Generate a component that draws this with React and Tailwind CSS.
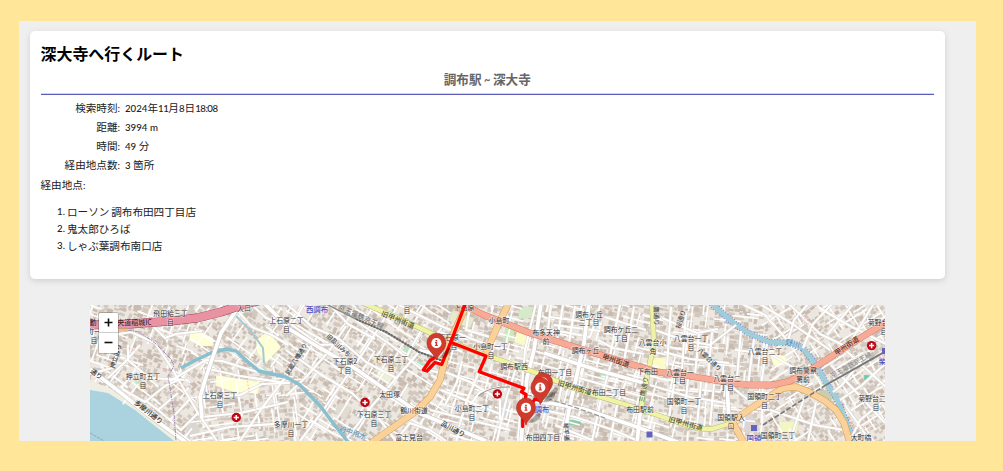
import React from "react";

const jp = "font-['Noto_Sans_CJK_JP',sans-serif]";
const num = "font-['Lato','Noto_Sans_CJK_JP',sans-serif]";

/* ---------- map data ---------- */

function rng(seed) {
  let s = seed;
  return () => {
    s = (s * 1664525 + 1013904223) % 4294967296;
    return s / 4294967296;
  };
}

// regional street direction in degrees
const angleAt = (x, y) => {
  if (x < 200) return y > 370 ? 38 : 20;
  if (x < 300) return y > 370 ? -8 : 35;
  if (x < 440) return 32;
  if (x < 680) return 15;
  if (x < 760) return 6;
  return -32;
};

function makeBuildings() {
  const r = rng(77);
  const out = [];
  for (let y = 302; y < 444; y += 4.6) {
    for (let x = 88; x < 888; x += 5) {
      if (r() < 0.24) continue;
      const w = 2.4 + r() * 3.8;
      const h = 2 + r() * 3.2;
      const a = angleAt(x, y) + (r() - 0.5) * 8;
      const shade = r() < 0.35 ? "#c9bbb0" : "#d3c8be";
      out.push([x + r() * 2, y + r() * 2, w, h, a, shade]);
    }
  }
  return out;
}

function makeLanes() {
  const r = rng(9);
  const out = [];
  for (let y = 300; y < 448; y += 15) {
    for (let x = 92; x < 890; x += 18) {
      const a = (angleAt(x, y) * Math.PI) / 180;
      const l = 7 + r() * 12;
      const px = x + r() * 6;
      const py = y + r() * 6;
      if (r() < 0.55) out.push([px - Math.cos(a) * l, py - Math.sin(a) * l, px + Math.cos(a) * l, py + Math.sin(a) * l]);
      const m = 5 + r() * 10;
      if (r() < 0.55) out.push([px + Math.sin(a) * m, py - Math.cos(a) * m, px - Math.sin(a) * m, py + Math.cos(a) * m]);
    }
  }
  return out;
}

const buildings = makeBuildings();
const lanes = makeLanes();

const areas = [
  ["190,332 197,330 213,338 213,346 202,346 189,341", "#ffffd6"],
  ["216,375 260,382 258,394 233,392 216,386", "#ffffd6"],
  ["256,340 268,331 281,347 266,363 257,353", "#ffffd6"],
  ["340,402 352,408 345,420 334,412", "#e0dbd3"],
  ["380,366 395,373 390,383 376,376", "#edf0d8"],
  ["452,311 474,318 470,328 449,320", "#e6ebcc"],
  ["400,352 408,346 412,352 405,356", "#b6e8c6"],
  ["417,361 424,363 421,370 415,367", "#a8ebc2"],
  ["136,381 142,382 141,389 135,387", "#b8ebc9"],
  ["259,370 264,366 267,371 262,373", "#b8ebc9"],
  ["506,327 515,328 512,341 503,339", "#c8ecb5"],
  ["517,331 529,333 525,346 514,342", "#fbfbc8"],
  ["520,308 533,307 531,318 518,319", "#d4ebc9"],
  ["602,371 606,371 604,381 599,379", "#a8ebc2"],
  ["569,420 581,420 581,425 569,425", "#8bcaa5"],
  ["653,358 667,357 666,371 652,369", "#fbfbc8"],
  ["769,353 786,356 787,365 774,366", "#ffffd6"],
  ["779,421 799,422 797,433 780,434", "#f2f5c4"],
  ["812,394 826,390 836,397 828,402", "#cccdb0"],
  ["820,384 828,380 829,385 823,388", "#c8ecb5"],
  ["864,375 869,375 869,380 864,380", "#66cfa8"],
  ["740,414 750,411 760,430 745,434", "#ddd5d3"],
  ["527,398 548,402 543,411 527,407", "#e3d8da"],
  ["500,401 512,404 507,419 495,415", "#dadada"],
  ["185,422 194,418 200,431 188,440", "#dad6d1"],
];

const minorRoads = [
  "90,326 108,336 131,332 155,343 171,367 198,413 217,441",
  "99,335 118,350 112,368 90,374",
  "128,345 128,360 149,378 186,380",
  "168,382 206,360 222,361 257,372",
  "205,368 240,376 286,383",
  "200,397 240,395 262,384 290,383",
  "202,417 240,413 288,402",
  "190,436 230,427 288,423",
  "288,374 262,408 240,441",
  "236,309 252,327 272,335 288,345",
  "252,305 266,318 288,326",
  "217,346 232,351 246,358 262,372",
  "150,323 165,338 176,334 202,331",
  "140,345 125,362 108,378",
  "122,389 145,402 165,386 178,380",
  "145,400 158,410 178,393",
  "158,410 170,420 190,399",
  "170,420 181,430 198,413",
  "286,303 312,327 338,338 366,362 396,378",
  "305,303 292,325 320,345 344,344",
  "300,441 322,412 342,383 365,350 386,316",
  "286,396 306,377 330,350 346,326",
  "286,350 320,374 352,393 380,420 396,441",
  "345,441 371,407 398,376 419,352",
  "396,440 410,423 430,430 446,441",
  "310,420 334,434 352,441",
  "355,320 391,345 420,368 440,373",
  "330,305 348,324 375,339",
  "425,324 412,346 405,360",
  "399,305 441,326 472,339 500,349",
  "440,370 470,382 500,400 500,420",
  "441,390 470,402 500,414",
  "430,410 470,420 510,430",
  "462,361 457,382 445,405",
  "479,372 467,400 458,430",
  "500,387 480,392 470,405",
  "517,365 507,396 497,441",
  "536,303 525,350 522,385 518,441",
  "470,306 466,330 490,337",
  "551,305 548,329 590,337 598,314",
  "563,305 556,346", "575,306 568,349", "550,317 602,324", "554,325 600,331",
  "598,340 613,348 644,354",
  "605,317 646,330", "620,305 610,356", "634,307 624,361",
  "570,357 562,384 557,409", "612,360 601,399 592,441",
  "628,376 617,405 610,441", "650,385 690,397 732,404",
  "561,373 590,381 620,390 644,397",
  "544,410 575,417 616,431 638,441",
  "555,425 592,440",
  "655,330 683,340 710,345 736,325",
  "662,318 697,333 718,329", "664,352 690,359 729,363",
  "671,307 667,366", "686,313 682,369", "699,334 695,375", "712,332 708,379",
  "675,378 669,418", "688,379 684,420", "701,382 697,426", "714,384 710,425", "727,386 730,423",
  "741,331 737,378", "754,339 748,385", "767,344 761,385",
  "735,350 770,354 801,372", "732,387 747,399 769,403",
  "740,303 765,315 789,342", "760,304 791,323 830,350",
  "788,303 820,334 845,346", "809,303 794,320 788,341",
  "833,303 813,324 803,348", "854,303 827,335", "874,303 848,346",
  "818,307 850,326 886,344", "842,347 886,387",
  "831,365 873,410 885,423", "870,350 842,385 833,392",
  "885,364 862,385 840,400", "885,400 860,420 850,441",
  "870,441 845,405", "804,398 790,441", "816,402 808,441", "770,410 815,425 844,430",
];

const whiteRoads = [
  "241,303 221,333 206,377 200,397 202,418",
  "90,369 121,393 147,414 187,443",
  "286,327 320,348 353,367 396,397 419,413 486,441",
  "264,303 286,325",
  "541,303 534,350 527,378 521,441",
  "589,303 584,343 569,410 563,443",
  "544,353 597,370 644,383",
  "641,405 637,443",
  "527,400 549,403 584,409 637,427 680,443",
  "727,385 729,420",
  "450,344 434,353 419,351",
];

const river1 = "181,368 196,360 211,353 226,349 236,351 247,361 259,371 272,374 286,377 300,385 321,407 336,427 349,443";
const river2 = "711,303 736,325 750,334 769,342 790,343 803,348 812,360 819,370 828,386 836,397 843,414 851,435 853,443";
const yellowRoads = [
  "356,300 403,320 449,341.7 486,355 534,372 584,392 637,408 686,425 700,429 712,429 738,421",
  "652,303 654,343 647,377 641,408",
];
const redRoads = ["453,300 484,315 527,332 584,350 627,363 657,372 684,375 719,381 750,385 773,385 790,381 812,369 846,347 888,321"];
const orangeRoads = [
  "469,300 449,343 440,380 430,397 415,412 371,443",
  "510,300 497,327 485,356",
  "730,423 753,407 783,388 796,387 809,392 825,401 836,410 844,423 850,443",
  "732,421 744,443",
];

const labels = [
  ["飛田給三丁", 170.5, 315.8], ["目", 170.5, 325],
  ["押立町五丁", 143, 378.5], ["目", 143, 387.5],
  ["上石原三丁", 220, 398], ["目", 220, 407],
  ["上石原二丁", 286.5, 322.5], ["目", 286.5, 331.5],
  ["入口", 244, 311.4], ["町一", 94, 334], ["目", 94, 343],
  ["目", 407, 313],
  ["下石原2", 345, 363.5], ["丁目", 344.5, 372.5],
  ["下石原二丁", 391, 361.5], ["目", 391, 370.5],
  ["太田塚", 389.5, 396.8], ["下石原三丁", 374, 416.5], ["目", 374, 425.5],
  ["鶴川街道", 414, 413], ["富士見台", 409, 440],
  ["多摩川一丁", 291, 427], ["目", 291, 436],
  ["下石原一", 452, 340], ["目", 454, 349], ["下石原", 464, 309.6],
  ["小島町", 499, 323], ["小島町一丁", 490.5, 348.5], ["目", 491, 357.5],
  ["調布駅西", 514, 368.5], ["布多天神", 546, 335], ["前", 546, 344],
  ["小島町二丁", 472, 410.5], ["目", 472, 419.5],
  ["調布ヶ丘", 589, 316.5], ["二丁目", 589, 325],
  ["調布ケ丘二", 621, 331.5], ["丁目", 621, 340.5],
  ["調布ヶ丘", 585.5, 353.3], ["布田一丁目", 555, 374.5],
  ["布田二丁目", 609, 394.5], ["布田四丁目", 543, 439.5],
  ["下布田", 647.5, 373.5], ["布田駅前", 640, 411.5],
  ["八雲台小", 652.5, 345], ["角", 653, 354],
  ["八雲台一丁", 691, 341], ["目", 691, 350],
  ["八雲台一", 680, 374.5], ["丁目", 679, 383],
  ["八雲台二丁", 765, 354], ["目", 765, 363],
  ["八雲台二", 727, 380.5], ["丁目", 727, 389.5],
  ["国領町一丁", 684, 403.5], ["目", 684, 412.5],
  ["国領町二丁", 764.5, 398.8], ["目", 764.5, 407.8],
  ["国領駅入", 731, 419.5], ["口", 731, 428.5],
  ["国領町三丁", 778, 438], ["調布警察", 803, 372.5], ["署前", 803, 381.5],
  ["菊野台", 878, 325], ["目", 884, 334],
  ["菊野台二", 872, 401], ["目", 876, 410], ["大町橋", 861, 439.5],
];

// text, x, y, rotation, colour, size
const roadLabels = [
  ["動", 93, 325, 0, "#4b2430", 7],
  ["中央道稲城IC", 131, 325.3, 0, "#4b2430", 7],
  ["押立通り", 118, 357, -72, "#333", 6.2],
  ["多摩川通り", 147, 414, 38, "#333", 6.8],
  ["通り", 95, 376, 35, "#333", 6.5],
  ["旧甲州街道", 397, 322, 22, "#4f4f2c", 7],
  ["京王電鉄京王線", 360, 319, 24, "#777", 7],
  ["旧品川みち", 337, 347, 43, "#444", 6],
  ["武蔵八幡通り", 298, 360, -58, "#444", 6],
  ["府中用水", 352, 435, 18, "#5a97bd", 7],
  ["品川通り", 452, 431, 28, "#333", 6.5],
  ["甲州街道", 615, 363, 18, "#5b2b20", 7],
  ["旧甲州街道", 574, 390, 17, "#4f4f2c", 7],
  ["旧甲州街道", 685, 426, 15, "#4f4f2c", 7],
  ["三鷹通り", 646, 390, -80, "#555", 6.5],
  ["鷹通り", 654, 316, 88, "#555", 6.5],
  ["桜通り", 683, 320, -72, "#555", 6.5],
  ["八雲台通り", 708, 361, 43, "#444", 6],
  ["琴平通", 564, 432, 85, "#444", 6],
  ["野川", 792, 346, 12, "#5a97bd", 7.5],
  ["甲州街道", 848, 348, -34, "#5b2b20", 7],
  ["京王電鉄京王線", 852, 367, -29, "#888", 6.5],
  ["西調布", 317, 311.5, 0, "#4c4cc0", 7.4],
  ["調布", 542, 411.5, 0, "#4c4cc0", 7.2],
  ["国領", 754, 440.5, 0, "#4c4cc0", 7.4],
  ["柴崎", 886, 364, 0, "#4c4cc0", 7.2],
];

const hospitals = [[236.3, 417.5], [365, 402.5], [497.4, 394], [871.6, 345.6]];

function Lines({ list, casing, fill, width }) {
  return (
    <g fill="none" strokeLinejoin="round">
      {list.map((p, i) => <polyline key={"c" + i} points={p} stroke={casing} strokeWidth={width + 1} />)}
      {list.map((p, i) => <polyline key={"f" + i} points={p} stroke={fill} strokeWidth={width} />)}
    </g>
  );
}

function Pin({ x, y }) {
  return (
    <g transform={`translate(${x} ${y})`}>
      <path d="M2 15 L12 5 C18 5 14 12 7 15 Z" fill="#000" opacity="0.28" />
      <path d="M0 17.2 C-2.2 10.5 -9.5 7.5 -9.5 0 A9.5 9.8 0 0 1 9.5 0 C9.5 7.5 2.2 10.5 0 17.2 Z" fill="#d03b2d" stroke="#a92f25" strokeWidth="0.6" />
      <circle r="5.1" cy="0.2" fill="#fff" />
      <path d="M-1.4 -0.9 H0.8 V2 H1.5 V3.1 H-1.5 V2 H-0.8 V0.1 H-1.4 Z M-0.9 -3 H0.8 V-1.5 H-0.9 Z" fill="#d03b2d" />
    </g>
  );
}

function MapCanvas() {
  return (
    <svg className={`block h-[136px] w-[795px] ${jp}`} viewBox="90 305 795 136" role="img">
      <rect x="90" y="305" width="795" height="136" fill="#ece8e1" />
      {buildings.map(([x, y, w, h, a, c], i) => (
        <rect key={i} x={x} y={y} width={w} height={h} fill={c} transform={`rotate(${a} ${x} ${y})`} />
      ))}
      {areas.map(([p, c], i) => <polygon key={i} points={p} fill={c} stroke="#d8d3c6" strokeWidth="0.3" />)}
      <polygon points="90,381 108,387 140,408 184,441 90,441" fill="#eeeee3" />
      <polygon points="90,390 108,393 135,410 150,422 174,441 90,441" fill="#aad3df" />
      <path d="M90 433 L104 441" stroke="#8c80b0" strokeWidth="0.6" strokeDasharray="3 1" />
      <g stroke="#fff" strokeWidth="1.6">
        {lanes.filter(([x, y, x2, y2]) => !(Math.max(x, x2) < 182 && Math.max(y, y2) > 378 + (Math.max(x, x2) - 90) * 0.55)).map(([a, b, c, d], i) => (
          <line key={i} x1={a} y1={b} x2={c} y2={d} />
        ))}
      </g>
      <g fill="none" stroke="#89bfce" strokeLinejoin="round">
        <polyline points={river2} strokeWidth="6.5" stroke="#5f6ee0" strokeDasharray="1 1.8" />
        <polyline points={river2} strokeWidth="5" stroke="#a0cdda" />
        <polyline points="236,316 251,331 263,348 264,363" strokeWidth="2" stroke="#a5cad3" />
      </g>
      <Lines list={minorRoads} casing="#dad4ce" fill="#fff" width={2.1} />
      <polyline points={river1} fill="none" strokeWidth="3.4" stroke="#89bfce" strokeLinejoin="round" />
      <Lines list={whiteRoads} casing="#cbc5bf" fill="#fff" width={3.8} />
      <g fill="none" stroke="#ef9a93" strokeWidth="0.6" strokeDasharray="1.5 1.7">
        <polyline points="94,333 112,345 133,349 149,366 166,369" />
        <polyline points="167,399 188,376 201,384" />
        <polyline points="247,378 251,404 265,419" />
        <polyline points="350,381 344,387 355,390 361,397" stroke="#cc8a42" />
        <polyline points="790,311 807,320 817,337" />
        <polyline points="845,419 862,430 876,421" />
      </g>
      <polyline points="121,329 139,332 155,343 171,359 174,366 168,376 174,413 176,441" fill="none" stroke="#9d81ab" strokeWidth="0.9" strokeDasharray="4 1 1 1" />
      <Lines list={yellowRoads} casing="#bcbd80" fill="#f0f3a4" width={4.4} />
      <Lines list={orangeRoads} casing="#d39c55" fill="#fbd19a" width={6} />
      <Lines list={redRoads} casing="#d87d68" fill="#f7aa96" width={5.8} />
      <Lines list={["88,325 130,324 171,321 197,318 221,312 245,304 262,300"]} casing="#99415a" fill="#e892a2" width={8} />
      <path d="M118 330 L128 330" stroke="#eabf8b" strokeWidth="3" />
      <g fill="none">
        <polyline points="326,304 356,319 386,332 419,352 443,361" stroke="#8a8a8a" strokeWidth="1.5" />
        <polyline points="356,319 386,332 419,352 443,361" stroke="#666" strokeWidth="2" strokeDasharray="2 1.2" />
        <polyline points="886,351 826,385" stroke="#777" strokeWidth="2" />
        <polyline points="826,385 763,425" stroke="#777" strokeWidth="1.6" strokeDasharray="5 2" />
        <polyline points="527,395 549,399 571,406 605,418" stroke="#999" strokeWidth="1.2" strokeDasharray="5 2" />
        <path d="M478 396 Q490 386 510 387" stroke="#888" strokeWidth="0.9" />
      </g>
      <g fill="#6464bd">
        <rect x="646.5" y="431.5" width="6" height="6" />
        <rect x="751" y="425" width="6" height="6" />
        <rect x="882" y="348" width="6" height="6" />
      </g>
      <g textAnchor="middle" fill="#333" fontSize="6.9" stroke="#fff" strokeOpacity="0.55" strokeWidth="1.2" paintOrder="stroke">
        {labels.map(([t, x, y], i) => <text key={i} x={x} y={y}>{t}</text>)}
      </g>
      <g textAnchor="middle" stroke="#fff" strokeOpacity="0.3" strokeWidth="0.7" paintOrder="stroke" fontWeight="500">
        {roadLabels.map(([t, x, y, a, c, s], i) => (
          <text key={i} x={x} y={y} fill={c} fontSize={s} transform={`rotate(${a} ${x} ${y})`}>{t}</text>
        ))}
      </g>
      {hospitals.map(([x, y]) => (
        <g key={x}>
          <circle cx={x} cy={y} r="4.7" fill="#bf0714" />
          <path d={`M${x - 2.6} ${y}h5.2M${x} ${y - 2.6}v5.2`} stroke="#fff" strokeWidth="1.5" />
        </g>
      ))}
      <g fill="none" stroke="#ff0000" strokeWidth="3.3" strokeLinejoin="round" strokeLinecap="round">
        <polyline points="466,302 450.7,342.3 486,356 479.3,371.7 510,383.3 524,388.3 521.5,391.8 526,394.5 525,400 533,402 535,399 541,401" />
        <polyline points="450.7,342.3 441.7,364.5 435,362.5 427,371 423.3,370 430,360.5 434,358" />
        <polyline points="522.7,426.5 522.7,415" />
      </g>
      <Pin x={436.4} y={343} />
      <Pin x={543} y={382.5} />
      <Pin x={540.3} y={387.3} />
      <Pin x={526} y={407.7} />
    </svg>
  );
}

/* ---------- page ---------- */

const N = ({ children }) => <span className={`${num} text-[9.7px] font-medium tracking-[0px]`}>{children}</span>;
const Tight = ({ children }) => <span className={`${num} text-[9.7px] font-medium tracking-[-0.5px]`}>{children}</span>;

const rows = [
  ["検索時刻", <><N>2024</N>年<Tight>11</Tight>月<N>8</N>日<Tight>18:08</Tight></>],
  ["距離", <N>3994 m</N>],
  ["時間", <><N>49 </N>分</>],
  ["経由地点数", <><N>3 </N>箇所</>],
];

const stops = ["ローソン 調布布田四丁目店", "鬼太郎ひろば", "しゃぶ葉調布南口店"];

export default function App() {
  return (
    <div className={`h-[471px] w-[1003px] overflow-hidden bg-[#ffe699] pt-[21px] pl-[19px] ${jp}`}>
      <main className="h-[420px] w-[957px] overflow-hidden bg-[#efefef] pt-[10px] pl-[11px]">
        <section className="h-[248px] w-[914.5px] rounded-[5px] bg-white px-[10.5px] pt-[11px] text-[10.6px] text-[#222] shadow-[0_2px_6px_rgba(0,0,0,0.13)]">
          <h1 className="h-[22px] text-[15.95px] leading-[22px] font-bold text-black">深大寺へ行くルート</h1>
          <h2 className="mt-[5px] h-[20px] text-center text-[12.6px] leading-[20px] font-bold text-[#666]">
            調布駅<span className={`${num} mx-[2.5px] text-[11px]`}>~</span>深大寺
          </h2>
          <div className="mt-[4px] h-[2px] border-b border-[#5b5bb8] bg-[#d3d3ee]" />
          <dl className="mt-[3px]">
            {rows.map(([k, v]) => (
              <div key={k} className="flex h-[19.2px] items-center gap-[5px] leading-[19px]">
                <dt className="w-[79.5px] text-right">{k}<N>:</N></dt>
                <dd className="whitespace-pre">{v}</dd>
              </div>
            ))}
          </dl>
          <p className="h-[19px] leading-[19px]">経由地点<N>:</N></p>
          <ol className="mt-[9px] pl-[16.5px]">
            {stops.map((s, i) => (
              <li key={s} className="flex h-[17px] items-center leading-[17px]">
                <span className="w-[10px]"><N>{i + 1}.</N></span>
                <span className="[word-spacing:-0.5px]">{s}</span>
              </li>
            ))}
          </ol>
        </section>

        <div className="relative mt-[26px] ml-[60px] h-[136px] w-[795px] overflow-hidden">
          <MapCanvas />
          <div className="absolute top-[7px] left-[7.5px] flex w-[21.5px] flex-col rounded-[2px] border border-black/20 bg-white bg-clip-padding">
            <button className="flex h-[20px] items-center justify-center border-b border-[#ccc]">
              <svg className="size-[9px]" viewBox="0 0 9 9"><path d="M4.5 0.5v8M0.5 4.5h8" stroke="#111" strokeWidth="1.6" /></svg>
            </button>
            <button className="flex h-[19.5px] items-center justify-center">
              <svg className="size-[9px]" viewBox="0 0 9 9"><path d="M0.5 4.5h8" stroke="#111" strokeWidth="1.6" /></svg>
            </button>
          </div>
        </div>
      </main>
    </div>
  );
}
